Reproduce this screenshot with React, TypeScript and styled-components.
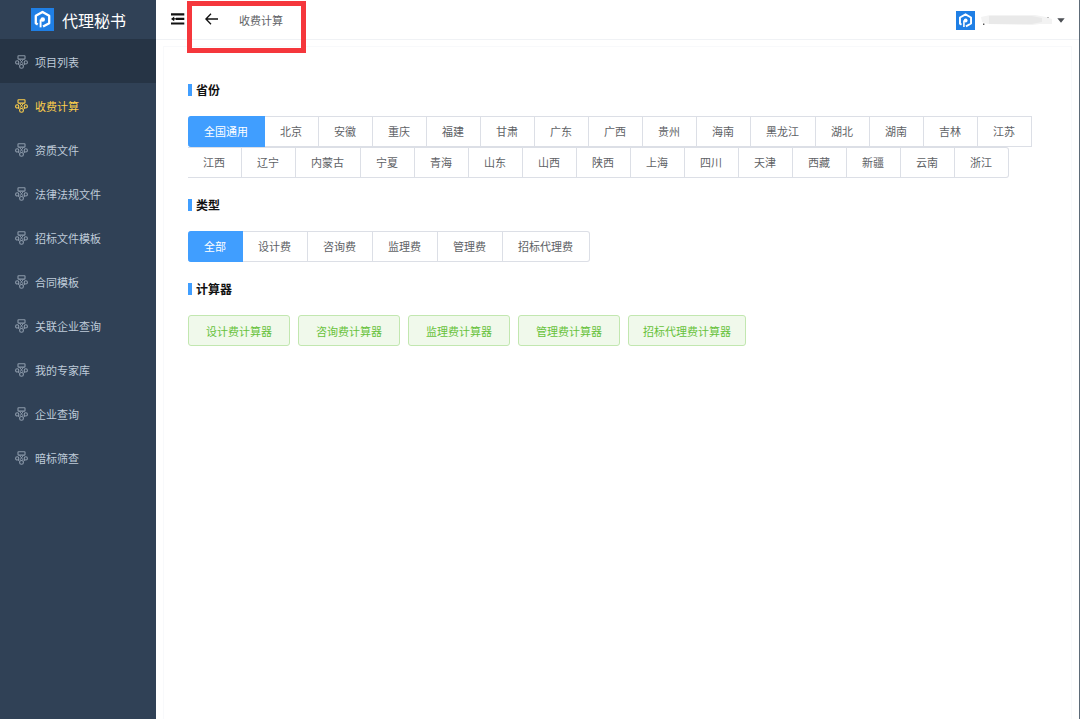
import React, { useState } from "react";
import styled, { createGlobalStyle, css } from "styled-components";

const GlobalStyle = createGlobalStyle`
  * { box-sizing: border-box; }
  html, body { margin: 0; padding: 0; }
  body, button, input {
    font-family: "Noto Sans CJK SC", "Liberation Sans", sans-serif;
  }
`;

const Shell = styled.div`
  display: flex;
  min-height: 100vh;
  background: #fff;
  border-right: 1px solid #5d6b78;
`;

const Sidebar = styled.aside`
  flex: 0 0 156px;
  background: #304156;
`;

const Brand = styled.a`
  display: flex;
  align-items: center;
  gap: 8px;
  height: 39px;
  padding-left: 31px;
  color: #fff;
  font-size: 16px;
  line-height: 24px;
  text-decoration: none;
`;

const NavLink = styled.a<{ $active: boolean; $shaded: boolean }>`
  display: flex;
  align-items: center;
  gap: 7px;
  height: 44px;
  padding: 2px 0 0 15px;
  font-size: 11px;
  line-height: 16px;
  text-decoration: none;
  color: ${(p) => (p.$active ? "#ffd04b" : "#bfcbd9")};
  background: ${(p) => (p.$shaded ? "#263445" : "transparent")};
  svg {
    opacity: ${(p) => (p.$active ? 1 : 0.65)};
  }
`;

const Page = styled.div`
  flex: 1;
  min-width: 0;
  display: flex;
  flex-direction: column;
`;

const TopBar = styled.header`
  display: flex;
  align-items: center;
  height: 40px;
  padding: 0 14px 2px 15px;
  border-bottom: 1px solid #f0f2f5;
`;

const IconButton = styled.button`
  display: flex;
  padding: 0;
  border: 0;
  background: none;
  color: #111;
  cursor: pointer;
`;

const Crumb = styled.div`
  position: relative;
  display: flex;
  align-items: center;
  gap: 21px;
  margin-left: 20px;
`;

const PageTitle = styled.span`
  padding-top: 2px;
  font-size: 11px;
  line-height: 16px;
  color: #606266;
`;

const Highlight = styled.div`
  position: absolute;
  left: -18px;
  top: -9px;
  width: 119px;
  height: 52px;
  border: 5px solid #f5373c;
  pointer-events: none;
`;

const Account = styled.button`
  display: flex;
  align-items: center;
  gap: 5px;
  margin-left: auto;
  padding: 4px 0 0;
  border: 0;
  background: none;
  cursor: pointer;
`;

const Card = styled.main`
  flex: 1;
  margin: 6px 7px 0;
  padding: 34px 24px 24px;
  border: 1px solid #f8f9fb;
  border-bottom: 0;
`;

const Heading = styled.h2`
  display: flex;
  align-items: center;
  gap: 4px;
  margin: 0;
  font-size: 12px;
  line-height: 18px;
  font-weight: 700;
  color: #111;
  &::before {
    content: "";
    width: 4px;
    height: 12px;
    background: #409eff;
  }
`;

const Options = styled.div`
  display: flex;
  flex-wrap: wrap;
  margin: 17px 0 18px;
`;

const Option = styled.label<{ $checked: boolean }>`
  height: 31px;
  padding: 0 16px 0 15px;
  border: 1px solid #dcdfe6;
  border-left-width: 0;
  font-size: 11px;
  line-height: 29px;
  color: #606266;
  cursor: pointer;
  &:first-child {
    padding-left: 16px;
    border-radius: 3px 0 0 3px;
  }
  &:last-child {
    border-radius: 0 3px 3px 0;
  }
  ${(p) =>
    p.$checked &&
    css`
      color: #fff;
      background: #409eff;
      border-color: #409eff;
    `}
`;

const HiddenRadio = styled.input`
  position: absolute;
  opacity: 0;
  width: 1px;
  height: 1px;
  margin: 0;
  pointer-events: none;
`;

const Calculators = styled.div`
  display: flex;
  flex-wrap: wrap;
  gap: 8px;
  margin-top: 17px;
`;

const CalcButton = styled.button`
  height: 31px;
  padding: 0 17px;
  border: 1px solid #c2e7b0;
  border-radius: 3px;
  background: #f0f9eb;
  color: #67c23a;
  font-size: 11px;
  line-height: 16px;
  cursor: pointer;
  &:last-child {
    padding: 0 14px;
  }
`;

const Logo = ({ size }: { size: number }) => (
  <svg width={size} height={size} viewBox="0 0 24 24" aria-hidden="true">
    <rect width="24" height="24" fill="#1f7fe5" />
    <path
      d="M7 17.2 L5 16 V8.2 L12 4.2 L19 8.2 V15.8 L12.6 19.4"
      fill="none"
      stroke="#fff"
      strokeWidth="2.4"
      strokeLinejoin="round"
    />
    <circle cx="12.2" cy="12" r="2.4" fill="#fff" />
    <path d="M10 12 V20.2" stroke="#fff" strokeWidth="2" />
  </svg>
);

const NodesIcon = () => (
  <svg width="13" height="14" viewBox="0 0 13 14" fill="none" stroke="currentColor" strokeWidth="1.1" aria-hidden="true">
    <rect x="3" y="0.7" width="7" height="3.4" rx="0.5" />
    <circle cx="2.2" cy="7.4" r="1.6" />
    <circle cx="10.8" cy="7.4" r="1.6" />
    <circle cx="6.5" cy="11.4" r="1.9" />
    <path d="M4.6 4.4 L8.2 9 M8.4 4.4 L4.8 9 M3 9 L4.7 10.4 M10 9 L8.3 10.4" strokeWidth="0.9" />
  </svg>
);

const FoldIcon = () => (
  <svg width="14" height="12" viewBox="0 0 14 12" fill="currentColor" aria-hidden="true">
    <path d="M0 0.2 H13.3 V2.4 H0 Z M5 4.8 H13.3 V7 H5 Z M0 9.4 H13.3 V11.6 H0 Z M0 5.9 L3.2 3.6 V8.2 Z M3 5.2 H5 V6.6 H3 Z" />
  </svg>
);

const BackIcon = () => (
  <svg width="13" height="12" viewBox="0 0 13 12" fill="none" stroke="currentColor" strokeWidth="1.3" aria-hidden="true">
    <path d="M6 0.8 L0.9 6 L6 11.2 M1 6 H13" />
  </svg>
);

const MaskedName = () => (
  <svg width="72" height="14" viewBox="0 0 72 14" aria-hidden="true">
    <path d="M1 3 L10 1 H55 L66 3 L72 5 V10 L60 10 L52 11 L8 10 L2 8 Z" fill="#f3f3f3" />
    <path d="M9 2 H52 L62 4 V8 L52 10 H9 Z" fill="#e9e9e9" />
    <path d="M3 9.5 h1.4 v1.6 h-1.4 z" fill="#555" />
    <path d="M67 3 h2 v1 h-2 z" fill="#bbb" />
  </svg>
);

const CaretIcon = () => (
  <svg width="8" height="5" viewBox="0 0 8 5" aria-hidden="true">
    <path d="M0.3 0.3 H7.7 L4 4.8 Z" fill="#4c4f54" />
  </svg>
);

const navItems = [
  "项目列表", "收费计算", "资质文件", "法律法规文件", "招标文件模板",
  "合同模板", "关联企业查询", "我的专家库", "企业查询", "暗标筛查",
];
const provinces = [
  "全国通用", "北京", "安徽", "重庆", "福建", "甘肃", "广东", "广西", "贵州", "海南",
  "黑龙江", "湖北", "湖南", "吉林", "江苏", "江西", "辽宁", "内蒙古", "宁夏", "青海",
  "山东", "山西", "陕西", "上海", "四川", "天津", "西藏", "新疆", "云南", "浙江",
];
const feeTypes = ["全部", "设计费", "咨询费", "监理费", "管理费", "招标代理费"];
const calculators = ["设计费计算器", "咨询费计算器", "监理费计算器", "管理费计算器", "招标代理费计算器"];

function RadioBar({ name, label, items }: { name: string; label: string; items: string[] }) {
  const [value, setValue] = useState(items[0]);
  return (
    <Options role="radiogroup" aria-label={label}>
      {items.map((item) => (
        <Option key={item} $checked={item === value}>
          <HiddenRadio type="radio" name={name} checked={item === value} onChange={() => setValue(item)} />
          {item}
        </Option>
      ))}
    </Options>
  );
}

export default function App() {
  return (
    <>
      <GlobalStyle />
      <Shell>
        <Sidebar>
          <Brand href="#">
            <Logo size={23} />
            代理秘书
          </Brand>
          <nav>
            {navItems.map((item, i) => (
              <NavLink key={item} href="#" $active={i === 1} $shaded={i === 0}>
                <NodesIcon />
                {item}
              </NavLink>
            ))}
          </nav>
        </Sidebar>
        <Page>
          <TopBar>
            <IconButton aria-label="折叠菜单">
              <FoldIcon />
            </IconButton>
            <Crumb>
              <IconButton aria-label="返回">
                <BackIcon />
              </IconButton>
              <PageTitle>收费计算</PageTitle>
              <Highlight />
            </Crumb>
            <Account aria-label="账户">
              <Logo size={19} />
              <MaskedName />
              <CaretIcon />
            </Account>
          </TopBar>
          <Card>
            <Heading>省份</Heading>
            <RadioBar name="province" label="省份" items={provinces} />
            <Heading>类型</Heading>
            <RadioBar name="feeType" label="类型" items={feeTypes} />
            <Heading>计算器</Heading>
            <Calculators>
              {calculators.map((item) => (
                <CalcButton key={item}>{item}</CalcButton>
              ))}
            </Calculators>
          </Card>
        </Page>
      </Shell>
    </>
  );
}
